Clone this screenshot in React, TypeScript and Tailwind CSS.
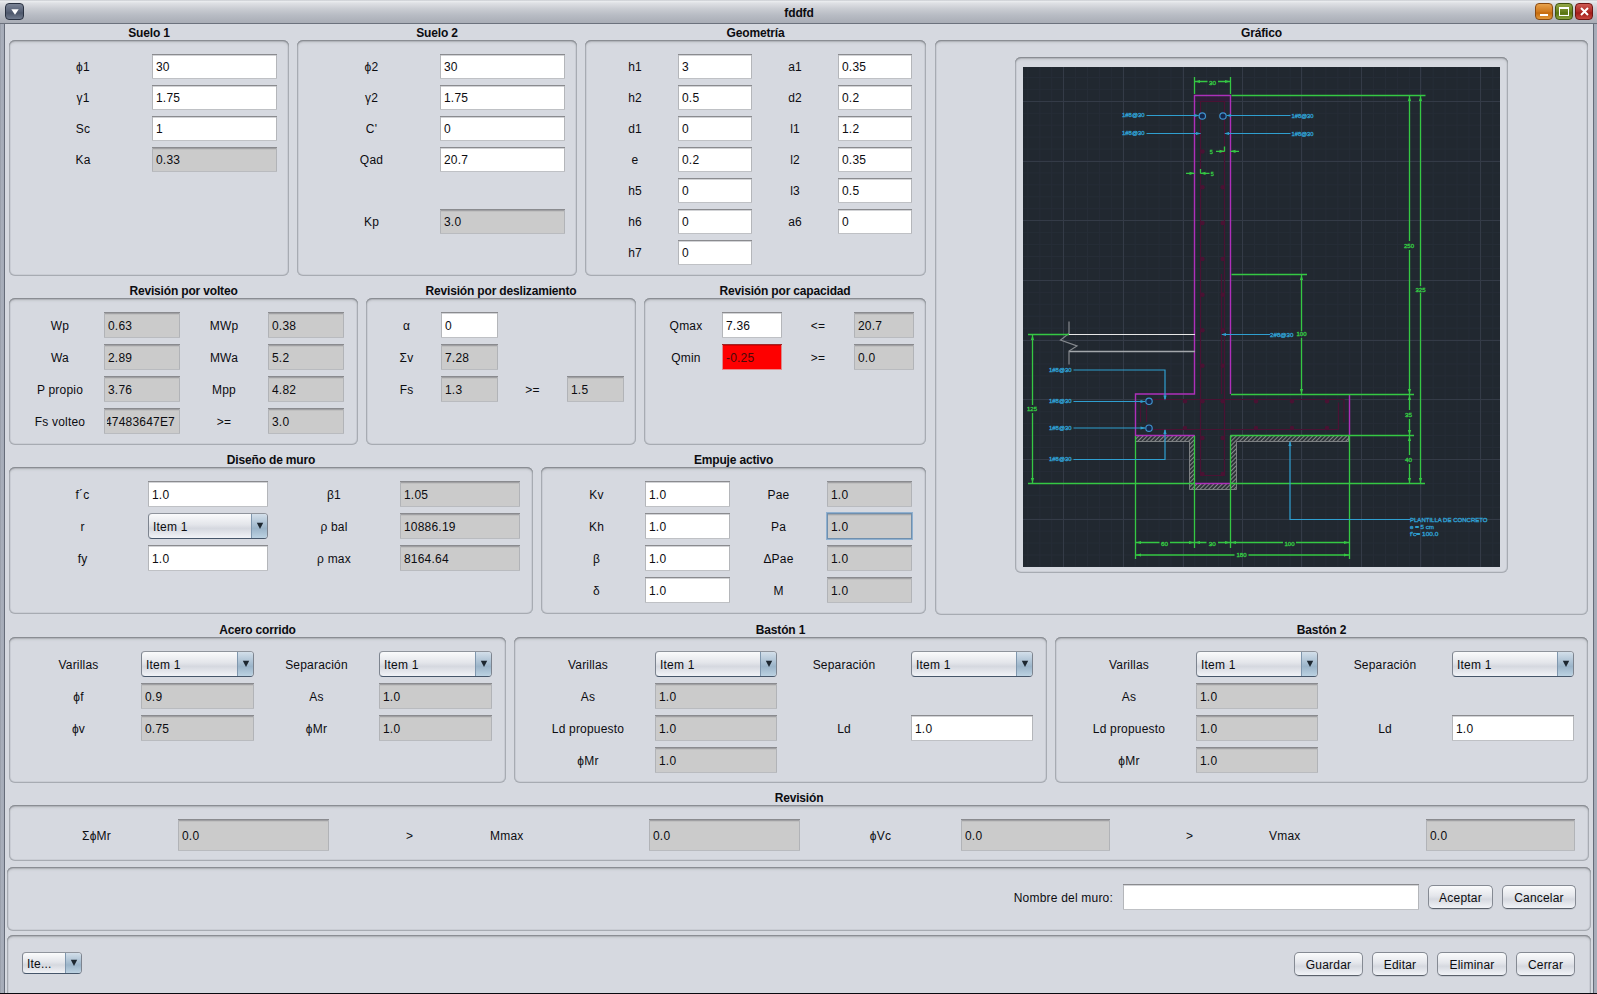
import React from "react";

type Tone = "white" | "gray" | "red" | "focus";

const TONES: Record<Tone, string> = {
  white:
    "bg-white shadow-[inset_0_1px_0_#8a8b8f,inset_0_-1px_0_#bfc1c5,inset_1px_0_0_#b4b6ba,inset_-1px_0_0_#b4b6ba,inset_0_2px_0_#d2d3d6]",
  gray:
    "bg-[#cbcbcb] shadow-[inset_0_1px_0_#8a8b8f,inset_0_-1px_0_#b9bbbf,inset_1px_0_0_#b1b3b7,inset_-1px_0_0_#b1b3b7,inset_0_2px_0_#a0a0a3,inset_0_3px_0_#c0c0c0]",
  red: "bg-[#fe0000] text-[#4a0a0a] shadow-[inset_0_1px_0_#a02525,inset_0_-1px_0_#e88a8c,inset_1px_0_0_#d98a8c,inset_-1px_0_0_#d98a8c,inset_0_2px_0_#d80000]",
  focus:
    "bg-[#cbcbcb] shadow-[0_0_0_1px_#8fb0d0,inset_0_0_0_1px_#6f8fae,inset_0_2px_0_#a1a5aa,inset_0_3px_0_#c0c0c0]",
};

function Field({ v, tone = "gray", className = "" }: { v: string; tone?: Tone; className?: string }) {
  return (
    <div className={`flex h-full items-center overflow-hidden pt-px pl-1 whitespace-nowrap ${TONES[tone]} ${className}`}>
      {v}
    </div>
  );
}

function Label({ t, className = "justify-center" }: { t?: string; className?: string }) {
  return <div className={`flex items-center pt-px whitespace-nowrap ${className}`}>{t}</div>;
}

function Combo({ v, className = "h-full" }: { v: string; className?: string }) {
  return (
    <div
      className={`flex overflow-hidden rounded-[4px] border border-[#7d848f] border-t-[#8f949c] border-b-[#46566a] bg-[linear-gradient(180deg,#fafbfc_0%,#e3e5ea_45%,#d5d8df_60%,#f1f3f7_100%)] ${className}`}
    >
      <div className="flex flex-1 items-center pt-px pl-[4px]">{v}</div>
      <div className="flex w-4 items-center justify-center border-l border-[#7f97ae] bg-[linear-gradient(180deg,#d3dfea_0%,#a9bfd2_45%,#9bb4c9_60%,#bcd2e2_100%)]">
        <svg width="8" height="8" viewBox="0 0 8 8">
          <path d="M0.800 0.700h6.400L4 6.900z" fill="#1d2730" />
        </svg>
      </div>
    </div>
  );
}

const PANEL =
  "rounded-[6px] shadow-[inset_0_1px_0_#8a8d93,inset_0_0_0_1px_#a7abb2,inset_0_2px_0_#b2b5bb,inset_0_3px_2px_#c6c9cf,inset_0_0_0_2px_#cacdd4]";

function Group({
  title,
  className = "",
  panel = "",
  children,
}: {
  title: string;
  className?: string;
  panel?: string;
  children: React.ReactNode;
}) {
  return (
    <section className={`flex shrink-0 flex-col ${className}`}>
      <h2 className="flex h-4 items-center justify-center pt-px text-[12px] font-bold tracking-[-0.17px]">{title}</h2>
      <div className={`grid flex-1 content-start pt-[14px] ${PANEL} ${panel}`}>{children}</div>
    </section>
  );
}

function Btn({ t, className }: { t: string; className: string }) {
  return (
    <button
      className={`flex h-6 items-center justify-center rounded-[5px] border border-[#858a93] border-b-[#5b616b] bg-[linear-gradient(180deg,#fafbfc_0%,#e4e6eb_45%,#d6d9e0_60%,#f1f3f7_100%)] pt-px shadow-[0_1px_0_#c3c7cf] ${className}`}
    >
      {t}
    </button>
  );
}

const GREEN = "#35c843";
const CYAN = "#2f9fd0";
const MAGENTA = "#ae2fba";
const REBAR = "#4a1233";

function Txt({ x, y, w, t, c }: { x: number; y: number; w: number; t: string; c: string }) {
  return (
    <text
      x={x}
      y={y + 2}
      textLength={w}
      lengthAdjust="spacingAndGlyphs"
      fill={c}
      stroke={c}
      strokeWidth="0.35"
      fontSize="6"
      letterSpacing="0"
      fontFamily="'Liberation Sans', sans-serif"
    >
      {t}
    </text>
  );
}

function Arrow({ x, y, d, c }: { x: number; y: number; d: "l" | "r" | "u" | "d"; c: string }) {
  const p = {
    l: `M${x} ${y}l5 -1.6v3.2z`,
    r: `M${x} ${y}l-5 -1.6v3.2z`,
    u: `M${x} ${y}l-1.6 5h3.2z`,
    d: `M${x} ${y}l-1.6 -5h3.2z`,
  }[d];
  return <path d={p} fill={c} stroke="none" />;
}

function WallDrawing() {
  const minorX = Array.from({ length: 40 }, (_, i) => 1027.9 + i * 11.92);
  const minorY = Array.from({ length: 42 }, (_, i) => 77.4 + i * 11.94);
  const majorX = [1063.5, 1123.5, 1183.5, 1242.5, 1301.5, 1361.5, 1420.5, 1480.5];
  const majorY = [101.5, 161.5, 220.5, 280.5, 340.5, 399.5, 459.5, 519.5];
  const wallDots = [151.5, 187.3, 223, 259, 294.7, 330.3, 365.7, 401.3, 438, 474];
  const slabDots = [1185, 1256, 1292, 1327];
  return (
    <svg width="477" height="500" viewBox="1023 67 477 500" className="block bg-[#212830]" fill="none">
      <defs>
        <pattern id="hatch" width="3" height="3" patternUnits="userSpaceOnUse" patternTransform="rotate(45)">
          <rect width="3" height="3" fill="#2b3036" />
          <path d="M0.5 0v3" stroke="#85888a" strokeWidth="1.1" />
        </pattern>
      </defs>
      <g stroke="#262d37" strokeWidth="1">
        {minorX.map((x) => (
          <path key={x} d={`M${x} 67v500`} />
        ))}
        {minorY.map((y) => (
          <path key={y} d={`M1023 ${y}h477`} />
        ))}
      </g>
      <g stroke="#343b47" strokeWidth="1">
        {majorX.map((x) => (
          <path key={x} d={`M${x} 67v500`} />
        ))}
        {majorY.map((y) => (
          <path key={y} d={`M1023 ${y}h477`} />
        ))}
      </g>

      <path d="M1196 97h34v5h-34z" fill="#3a1440" opacity="0.6" />
      <g stroke={REBAR} strokeWidth="1.2">
        <path d="M1200.5 475.5V101.5H1224.5V475.5z" />
        <path d="M1221.5 274v120M1151 399.5h193v23M1146.5 429.5h192v-27M1140.5 402v20M1146.5 402v20" />
      </g>
      <g fill={REBAR}>
        {wallDots.map((y) => (
          <g key={y}>
            <circle cx="1202.5" cy={y} r="2.2" />
            <circle cx="1222.7" cy={y} r="2.2" />
          </g>
        ))}
        {slabDots.map((x) => (
          <g key={x}>
            <circle cx={x} cy="401.3" r="2.2" />
            <circle cx={x} cy="428" r="2.2" />
          </g>
        ))}
      </g>

      <path
        d="M1135.5 435.5H1194.5V483.5H1230.5V435.5H1348.5V441.5H1236.5V489.5H1189.5V441.5H1135.5z"
        fill="url(#hatch)"
        stroke="#85888a"
        strokeWidth="0.9"
      />

      <path
        d="M1230.5 394V95.5H1194.5V394H1135.5V435.5H1194.5M1349.5 394V435.5M1195 483.5H1230"
        stroke={MAGENTA}
        strokeWidth="1.4"
      />

      <path d="M1069 334.5h126" stroke="#e8e8e8" strokeWidth="1.2" />
      <path d="M1069 351.5h126" stroke="#a3a7ab" strokeWidth="1.4" />
      <path d="M1069 321.5v12l-8.5 6.5 16.5 6-8 5v13.5" stroke="#85898e" strokeWidth="1.2" />

      <g stroke={GREEN} strokeWidth="1.3">
        <path d="M1194.5 77v17M1230.5 77v17M1195 81.5h12.5M1218 81.5h12" />
        <path d="M1231.5 95.5h194M1409.5 95.5V241M1409.5 250V410M1409.5 419V455M1409.5 464V483.5M1420.5 95.5V286M1420.5 293V483.5" />
        <path d="M1231.5 274.5h75.5M1301.5 274.5V331M1301.5 338V394" />
        <path d="M1231 394.5h183M1230.5 435.5h183.5M1028 483.5h167M1231 483.5h194" />
        <path d="M1028 334.5h41M1032.5 334.5V405M1032.5 413V483.5" />
        <path d="M1135.5 436V559M1194.5 436V548M1230.5 436V548M1349.5 436V559" />
        <path d="M1135.5 542.5h24M1170 542.5h36.5M1218 542.5h65M1296 542.5h53.5" />
        <path d="M1135.5 555h99M1248.5 555h101" />
        <path d="M1216 151.3h8.5M1224.5 146.5v5M1230.5 151.3h8.5M1186 173.3h8.5M1200.5 169v4.5M1200.5 173.3h9" />
      </g>
      <Arrow x={1195} y={81.5} d="l" c={GREEN} />
      <Arrow x={1230} y={81.5} d="r" c={GREEN} />
      <Arrow x={1409.5} y={96} d="u" c={GREEN} />
      <Arrow x={1420.5} y={96} d="u" c={GREEN} />
      <Arrow x={1301.5} y={275} d="u" c={GREEN} />
      <Arrow x={1301.5} y={394} d="d" c={GREEN} />
      <Arrow x={1409.5} y={394} d="d" c={GREEN} />
      <Arrow x={1409.5} y={395} d="u" c={GREEN} />
      <Arrow x={1409.5} y={435} d="d" c={GREEN} />
      <Arrow x={1409.5} y={436} d="u" c={GREEN} />
      <Arrow x={1409.5} y={483} d="d" c={GREEN} />
      <Arrow x={1420.5} y={483} d="d" c={GREEN} />
      <Arrow x={1032.5} y={335} d="u" c={GREEN} />
      <Arrow x={1032.5} y={483} d="d" c={GREEN} />
      <Arrow x={1136} y={542.5} d="l" c={GREEN} />
      <Arrow x={1194} y={542.5} d="r" c={GREEN} />
      <Arrow x={1195} y={542.5} d="l" c={GREEN} />
      <Arrow x={1230} y={542.5} d="r" c={GREEN} />
      <Arrow x={1231} y={542.5} d="l" c={GREEN} />
      <Arrow x={1349} y={542.5} d="r" c={GREEN} />
      <Arrow x={1136} y={555} d="l" c={GREEN} />
      <Arrow x={1349} y={555} d="r" c={GREEN} />
      <Arrow x={1224.5} y={151.3} d="r" c={GREEN} />
      <Arrow x={1230.5} y={151.3} d="l" c={GREEN} />
      <Arrow x={1194.5} y={173.3} d="r" c={GREEN} />
      <Arrow x={1200.5} y={173.3} d="l" c={GREEN} />
      <Txt x={1209} y={82.5} w={7} t="30" c={GREEN} />
      <Txt x={1209.8} y={152} w={3} t="5" c={GREEN} />
      <Txt x={1210.8} y={173.7} w={3} t="5" c={GREEN} />
      <Txt x={1404} y={245.7} w={10} t="250" c={GREEN} />
      <Txt x={1415.5} y={289.5} w={10} t="325" c={GREEN} />
      <Txt x={1296.5} y={334.3} w={10} t="100" c={GREEN} />
      <Txt x={1405} y={415} w={7} t="35" c={GREEN} />
      <Txt x={1405} y={459.7} w={7} t="40" c={GREEN} />
      <Txt x={1027} y={409} w={10} t="125" c={GREEN} />
      <Txt x={1161} y={543.5} w={7} t="60" c={GREEN} />
      <Txt x={1208.7} y={543.5} w={7} t="30" c={GREEN} />
      <Txt x={1284.5} y={543.5} w={10} t="100" c={GREEN} />
      <Txt x={1236.5} y={555} w={10} t="180" c={GREEN} />

      <g stroke={CYAN} strokeWidth="1.2">
        <path d="M1146.5 115.5h52M1227 115.5h63.5M1146.5 133.5h54M1225 133.5h65.5M1222 334.5h48" />
        <path d="M1073.5 370H1165V399M1073.5 401.5H1145M1073.5 428H1145M1073.5 459.5H1165V430M1290 442V519.5H1410" />
      </g>
      <g stroke="#3f93cf" strokeWidth="1.2" fill="#14264a">
        <circle cx="1202.3" cy="116" r="3.2" />
        <circle cx="1223" cy="116" r="3.2" />
        <circle cx="1149" cy="401.3" r="3.2" />
        <circle cx="1149" cy="428.2" r="3.2" />
      </g>
      <Arrow x={1199.5} y={115.5} d="r" c={CYAN} />
      <Arrow x={1226} y={115.5} d="l" c={CYAN} />
      <Arrow x={1201} y={133.5} d="r" c={CYAN} />
      <Arrow x={1224} y={133.5} d="l" c={CYAN} />
      <Arrow x={1221} y={334.5} d="l" c={CYAN} />
      <Arrow x={1165} y={400.5} d="d" c={CYAN} />
      <Arrow x={1165} y={429} d="u" c={CYAN} />
      <Arrow x={1145.5} y={401.5} d="r" c={CYAN} />
      <Arrow x={1145.5} y={428} d="r" c={CYAN} />
      <Arrow x={1290} y={441} d="u" c={CYAN} />
      <Txt x={1122} y={114.7} w={22.5} t="1#8@30" c={CYAN} />
      <Txt x={1122} y={133} w={22.5} t="1#8@30" c={CYAN} />
      <Txt x={1291.5} y={116.3} w={22} t="1#8@30" c={CYAN} />
      <Txt x={1291.5} y={133.8} w={22} t="1#8@30" c={CYAN} />
      <Txt x={1270} y={334.5} w={23.5} t="2#8@30" c={CYAN} />
      <Txt x={1049} y={369.5} w={22.5} t="1#8@30" c={CYAN} />
      <Txt x={1049} y={401.2} w={22.5} t="1#8@30" c={CYAN} />
      <Txt x={1049} y={427.7} w={22.5} t="1#8@30" c={CYAN} />
      <Txt x={1049} y={459} w={22.5} t="1#8@30" c={CYAN} />
      <Txt x={1410} y={519.5} w={77.5} t="PLANTILLA DE CONCRETO" c={CYAN} />
      <Txt x={1410} y={526.8} w={24} t="e = 5 cm" c={CYAN} />
      <Txt x={1410} y={534.3} w={28.5} t="f'c= 100.0" c={CYAN} />
    </svg>
  );
}

function Baston({ title, className, panel }: { title: string; className: string; panel: string }) {
  return (
    <Group title={title} className={className} panel={panel}>
      <Label t="Varillas" />
      <Combo v="Item 1" />
      <Label t="Separación" />
      <Combo v="Item 1" />
      <Label t="As" />
      <Field v="1.0" />
      <Label />
      <Label />
      <Label t="Ld propuesto" />
      <Field v="1.0" />
      <Label t="Ld" />
      <Field v="1.0" tone="white" />
      <Label t="ϕMr" />
      <Field v="1.0" />
    </Group>
  );
}

function TitleBar() {
  return (
    <header className="flex h-6 shrink-0 items-start border-b border-[#6c727d] bg-[linear-gradient(180deg,#b9bcc2_0px,#eceef1_1px,#dfe1e5_3px,#c9ccd2_9px,#b8bcc4_15px,#a9adb6_23px)] pt-[3px] pr-1 pl-[5px]">
      <div className="flex h-[17px] w-[19px] items-center justify-center rounded-[4px] border border-[#2a3242] bg-[linear-gradient(180deg,#7b8496_0%,#566075_50%,#4d576b_60%,#717b8e_100%)]">
        <svg width="8" height="6" viewBox="0 0 8 6">
          <path d="M0.3 0.3h7.4L4 5.8z" fill="#fff" />
        </svg>
      </div>
      <h1 className="flex h-[19px] flex-1 items-center justify-center pl-[39px] text-[12px] font-bold tracking-[-0.1px]">fddfd</h1>
      <div className="flex gap-[2px]">
        <div className="flex h-[17px] w-[18px] items-end justify-center rounded-[4px] border border-[#8a4a10] bg-[linear-gradient(180deg,#e8a24c_0%,#d07a1e_50%,#c46a0c_60%,#e39a3c_100%)] pb-[3px]">
          <div className="h-[2px] w-2 bg-white" />
        </div>
        <div className="flex h-[17px] w-[18px] items-center justify-center rounded-[4px] border border-[#3f5210] bg-[linear-gradient(180deg,#93a848_0%,#66801c_50%,#587310_60%,#88a03a_100%)]">
          <div className="h-[9px] w-[10px] border border-t-2 border-white" />
        </div>
        <div className="flex h-[17px] w-[18px] items-center justify-center rounded-[4px] border border-[#6e1414] bg-[linear-gradient(180deg,#cf5a54_0%,#ae2a26_50%,#9e1c18_60%,#c9463f_100%)]">
          <svg width="9" height="9" viewBox="0 0 9 9">
            <path d="M1 1l7 7M8 1l-7 7" stroke="#fff" strokeWidth="2" />
          </svg>
        </div>
      </div>
    </header>
  );
}

export default function App() {
  return (
    <div className="flex h-[994px] w-[1597px] flex-col overflow-hidden border-b border-[#0a0a10] bg-[#d6d9e0] font-['Liberation_Sans',Arial,sans-serif] text-[12px] leading-[14px] tracking-[0.2px] text-[#0c0c10]">
      <TitleBar />
      <div className="flex min-h-0 flex-1">
        <div className="w-[5px] shrink-0 bg-[linear-gradient(90deg,#8d929d_0px,#a9afbb_1px,#a4aab7_4px,#666c79_4px)]" />
        <main className="flex w-[1588px] shrink-0 flex-col">
          <div className="flex shrink-0 gap-[9px] pl-1">
            <div className="flex w-[917px] flex-col gap-[6px]">
              <div className="flex h-[252px] gap-2">
                <Group title="Suelo 1" className="w-[280px]" panel="auto-rows-[25px] grid-cols-[138px_125px] gap-y-[6px] pl-[5px]">
                  <Label t="ϕ1" />
                  <Field v="30" tone="white" />
                  <Label t="γ1" />
                  <Field v="1.75" tone="white" />
                  <Label t="Sc" />
                  <Field v="1" tone="white" />
                  <Label t="Ka" />
                  <Field v="0.33" />
                </Group>
                <Group title="Suelo 2" className="w-[280px]" panel="auto-rows-[25px] grid-cols-[137px_125px] gap-y-[6px] pl-[6px]">
                  <Label t="ϕ2" />
                  <Field v="30" tone="white" />
                  <Label t="γ2" />
                  <Field v="1.75" tone="white" />
                  <Label t="C'" />
                  <Field v="0" tone="white" />
                  <Label t="Qad" />
                  <Field v="20.7" tone="white" />
                  <Label />
                  <Label />
                  <Label t="Kp" />
                  <Field v="3.0" />
                </Group>
                <Group title="Geometría" className="w-[341px]" panel="auto-rows-[25px] grid-cols-[86px_74px_86px_74px] gap-y-[6px] pl-[7px]">
                  <Label t="h1" />
                  <Field v="3" tone="white" />
                  <Label t="a1" />
                  <Field v="0.35" tone="white" />
                  <Label t="h2" />
                  <Field v="0.5" tone="white" />
                  <Label t="d2" />
                  <Field v="0.2" tone="white" />
                  <Label t="d1" />
                  <Field v="0" tone="white" />
                  <Label t="l1" />
                  <Field v="1.2" tone="white" />
                  <Label t="e" />
                  <Field v="0.2" tone="white" />
                  <Label t="l2" />
                  <Field v="0.35" tone="white" />
                  <Label t="h5" />
                  <Field v="0" tone="white" />
                  <Label t="l3" />
                  <Field v="0.5" tone="white" />
                  <Label t="h6" />
                  <Field v="0" tone="white" />
                  <Label t="a6" />
                  <Field v="0" tone="white" />
                  <Label t="h7" />
                  <Field v="0" tone="white" />
                </Group>
              </div>

              <div className="flex h-[163px] gap-2">
                <Group title="Revisión por volteo" className="w-[349px]" panel="auto-rows-[26px] grid-cols-[88px_76px_88px_76px] gap-y-[6px] pl-[7px]">
                  <Label t="Wp" />
                  <Field v="0.63" />
                  <Label t="MWp" />
                  <Field v="0.38" />
                  <Label t="Wa" />
                  <Field v="2.89" />
                  <Label t="MWa" />
                  <Field v="5.2" />
                  <Label t="P propio" />
                  <Field v="3.76" />
                  <Label t="Mpp" />
                  <Field v="4.82" />
                  <Label t="Fs volteo" />
                  <div className={`flex h-full items-center pt-px pr-[5px] pl-[3px] ${TONES.gray}`}>
                    <div className="flex flex-1 justify-end overflow-hidden">47483647E7</div>
                  </div>
                  <Label t=">=" />
                  <Field v="3.0" />
                </Group>
                <Group title="Revisión por deslizamiento" className="w-[270px]" panel="auto-rows-[26px] grid-cols-[69px_57px_69px_57px] gap-y-[6px] pl-[6px]">
                  <Label t="α" />
                  <Field v="0" tone="white" />
                  <Label />
                  <Label />
                  <Label t="Σv" />
                  <Field v="7.28" />
                  <Label />
                  <Label />
                  <Label t="Fs" />
                  <Field v="1.3" />
                  <Label t=">=" />
                  <Field v="1.5" />
                </Group>
                <Group title="Revisión por capacidad" className="w-[282px]" panel="auto-rows-[26px] grid-cols-[72px_60px_72px_60px] gap-y-[6px] pl-[6px]">
                  <Label t="Qmax" />
                  <Field v="7.36" tone="white" />
                  <Label t="<=" />
                  <Field v="20.7" />
                  <Label t="Qmin" />
                  <Field v="-0.25" tone="red" />
                  <Label t=">=" />
                  <Field v="0.0" />
                </Group>
              </div>

              <div className="flex h-[163px] gap-2">
                <Group title="Diseño de muro" className="w-[524px]" panel="auto-rows-[26px] grid-cols-[131px_120px_132px_120px] gap-y-[6px] pl-[8px]">
                  <Label t="f´c" />
                  <Field v="1.0" tone="white" />
                  <Label t="β1" />
                  <Field v="1.05" />
                  <Label t="r" />
                  <Combo v="Item 1" />
                  <Label t="ρ bal" />
                  <Field v="10886.19" />
                  <Label t="fy" />
                  <Field v="1.0" tone="white" />
                  <Label t="ρ max" />
                  <Field v="8164.64" />
                </Group>
                <Group title="Empuje activo" className="w-[385px]" panel="auto-rows-[26px] grid-cols-[97px_85px_97px_85px] gap-y-[6px] pl-[7px]">
                  <Label t="Kv" />
                  <Field v="1.0" tone="white" />
                  <Label t="Pae" />
                  <Field v="1.0" />
                  <Label t="Kh" />
                  <Field v="1.0" tone="white" />
                  <Label t="Pa" />
                  <Field v="1.0" tone="focus" />
                  <Label t="β" />
                  <Field v="1.0" tone="white" />
                  <Label t="ΔPae" />
                  <Field v="1.0" />
                  <Label t="δ" />
                  <Field v="1.0" tone="white" />
                  <Label t="M" />
                  <Field v="1.0" />
                </Group>
              </div>
            </div>

            <section className="flex h-[591px] w-[653px] flex-col">
              <h2 className="flex h-4 items-center justify-center pt-px text-[12px] font-bold tracking-[-0.17px]">Gráfico</h2>
              <div className={`flex-1 pt-[17px] pl-[80px] ${PANEL}`}>
                <div className={`h-[516px] w-[493px] pt-[10px] pl-[8px] ${PANEL}`}>
                  <WallDrawing />
                </div>
              </div>
            </section>
          </div>

          <div className="mt-[6px] flex h-[162px] shrink-0 gap-2 pl-1">
            <Group title="Acero corrido" className="w-[497px]" panel="auto-rows-[26px] grid-cols-[125px_113px_125px_113px] gap-y-[6px] pl-[7px]">
              <Label t="Varillas" />
              <Combo v="Item 1" />
              <Label t="Separación" />
              <Combo v="Item 1" />
              <Label t="ϕf" />
              <Field v="0.9" />
              <Label t="As" />
              <Field v="1.0" />
              <Label t="ϕv" />
              <Field v="0.75" />
              <Label t="ϕMr" />
              <Field v="1.0" />
            </Group>
            <Baston title="Bastón 1" className="w-[533px]" panel="auto-rows-[26px] grid-cols-[134px_122px_134px_122px] gap-y-[6px] pl-[7px]" />
            <Baston title="Bastón 2" className="w-[533px]" panel="auto-rows-[26px] grid-cols-[134px_122px_134px_122px] gap-y-[6px] pl-[7px]" />
          </div>

          <Group
            title="Revisión"
            className="mt-[6px] ml-1 h-[72px] w-[1580px]"
            panel="auto-rows-[32px] grid-cols-[163px_151px_161px_159px_151px_161px_149px_159px_157px_149px] pl-[6px]"
          >
            <Label t="ΣϕMr" />
            <Field v="0.0" />
            <Label t=">" />
            <Label t="Mmax" className="justify-start" />
            <Field v="0.0" />
            <Label t="ϕVc" />
            <Field v="0.0" />
            <Label t=">" />
            <Label t="Vmax" className="justify-start" />
            <Field v="0.0" />
          </Group>

          <div className={`mt-[6px] ml-[2px] flex h-16 w-[1584px] shrink-0 items-start justify-end pt-[17px] pr-[15px] ${PANEL}`}>
            <Label t="Nombre del muro:" className="mr-[10px] h-[26px]" />
            <div className={`mr-[9px] h-[26px] w-[296px] ${TONES.white}`} />
            <Btn t="Aceptar" className="mt-px mr-[9px] w-[65px]" />
            <Btn t="Cancelar" className="mt-px w-[74px]" />
          </div>

          <div className={`mt-1 ml-[2px] flex h-[70px] w-[1584px] shrink-0 items-start justify-between pt-[17px] pr-[16px] pl-[15px] ${PANEL}`}>
            <Combo v="Ite..." className="h-[22px] w-[60px]" />
            <div className="flex gap-[9px]">
              <Btn t="Guardar" className="w-[69px]" />
              <Btn t="Editar" className="w-[56px]" />
              <Btn t="Eliminar" className="w-[70px]" />
              <Btn t="Cerrar" className="w-[59px]" />
            </div>
          </div>
        </main>
        <div className="flex-1 bg-[linear-gradient(90deg,#666c79_0px,#666c79_1px,#a4aab7_1px,#a9afbb_4px)]" />
      </div>
    </div>
  );
}
